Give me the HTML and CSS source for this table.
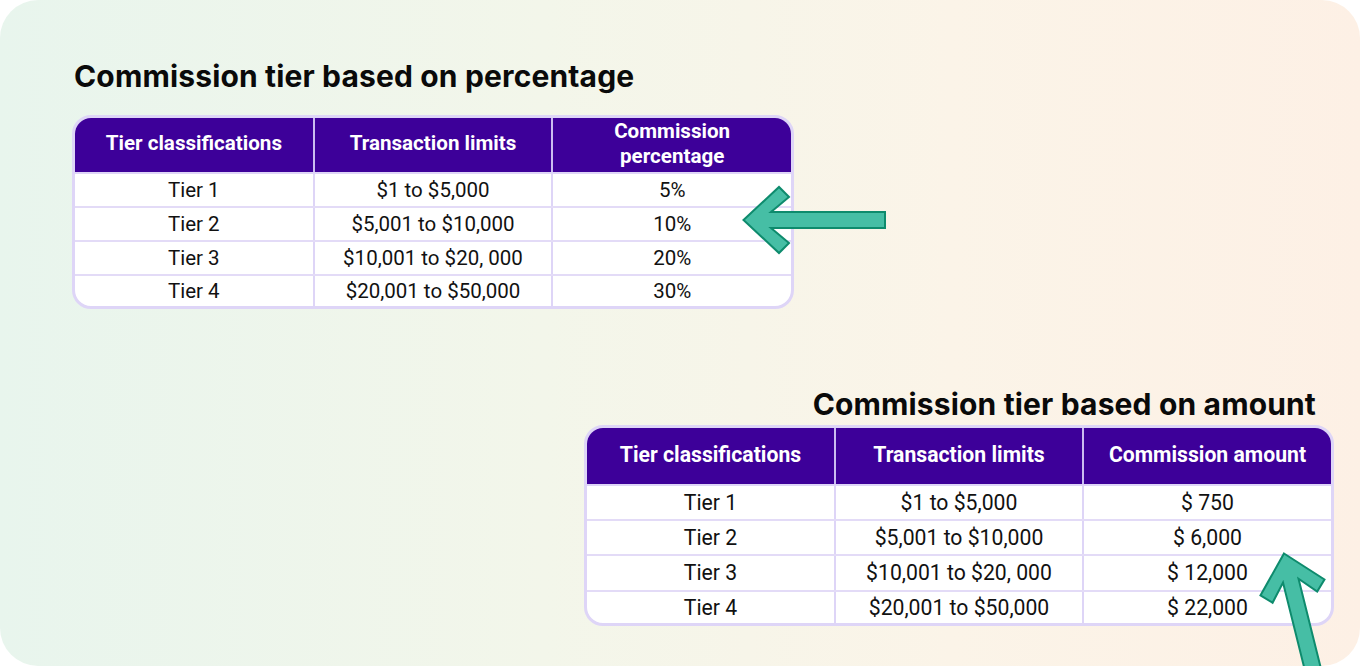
FILE: index.html
```html
<!DOCTYPE html>
<html lang="en">
<head>
<meta charset="utf-8">
<title>Commission tiers</title>
<link rel="stylesheet" href="styles.css">
</head>
<body>
<main class="card">
  <section class="block block-pct">
    <h2 class="title">Commission tier based on percentage</h2>
    <div class="table-wrap t1">
      <table class="tiers">
        <thead>
          <tr>
            <th>Tier classifications</th>
            <th>Transaction limits</th>
            <th>Commission<br>percentage</th>
          </tr>
        </thead>
        <tbody>
          <tr><td>Tier 1</td><td>$1 to $5,000</td><td>5%</td></tr>
          <tr><td>Tier 2</td><td>$5,001 to $10,000</td><td>10%</td></tr>
          <tr><td>Tier 3</td><td>$10,001 to $20, 000</td><td>20%</td></tr>
          <tr class="last"><td>Tier 4</td><td>$20,001 to $50,000</td><td>30%</td></tr>
        </tbody>
      </table>
    </div>
  </section>

  <section class="block block-amt">
    <h2 class="title title-right">Commission tier based on amount</h2>
    <div class="table-wrap t2">
      <table class="tiers">
        <thead>
          <tr>
            <th>Tier classifications</th>
            <th>Transaction limits</th>
            <th>Commission amount</th>
          </tr>
        </thead>
        <tbody>
          <tr><td>Tier 1</td><td>$1 to $5,000</td><td>$ 750</td></tr>
          <tr><td>Tier 2</td><td>$5,001 to $10,000</td><td>$ 6,000</td></tr>
          <tr class="r3"><td>Tier 3</td><td>$10,001 to $20, 000</td><td>$ 12,000</td></tr>
          <tr class="last"><td>Tier 4</td><td>$20,001 to $50,000</td><td>$ 22,000</td></tr>
        </tbody>
      </table>
    </div>
  </section>

  <svg class="arrows" width="1360" height="666" viewBox="0 0 1360 666" aria-hidden="true">
    <polygon class="arrow" points="743.5,220 779,187 789,197 771,212 885,212 885,228 771,228 789,243 779,253"/>
    <g transform="translate(1284,553.5) rotate(76)">
      <polygon class="arrow" points="0,0 35,-33 45,-23 28,-8 200,-8 200,8 28,8 45,23 35,33"/>
    </g>
  </svg>
</main>
</body>
</html>
```

FILE: styles.css
```css
* { box-sizing: border-box; }

html, body {
  margin: 0;
  padding: 0;
  background: #ffffff;
}

.card {
  position: relative;
  width: 1360px;
  height: 666px;
  border-radius: 38px;
  overflow: hidden;
  background: linear-gradient(90deg, #e8f5ed 0%, #f3f6ea 40%, #fbf4e8 70%, #fdf0e5 100%);
  display: flex;
  flex-direction: column;
  font-family: Roboto, "Liberation Sans", sans-serif;
}

.block-pct {
  padding: 59px 0 0 72px;
}

.block-amt {
  align-self: flex-end;
  margin: 78px 26px 0 0;
  width: 750px;
}

.title {
  margin: 0 0 22px 2px;
  font-family: Inter, "Liberation Sans", sans-serif;
  font-weight: 700;
  font-size: 30px;
  line-height: 34px;
  color: #0a0a0a;
  letter-spacing: 0.15px;
}

.title-right {
  text-align: right;
  margin: 0 18px 4px 0;
}

.table-wrap {
  border: 3px solid #ded5f7;
  border-radius: 19px;
  overflow: hidden;
  background: #ffffff;
}

.t1 { width: 722px; }
.t2 { width: 750px; }

.tiers {
  width: 100%;
  border-collapse: collapse;
  table-layout: fixed;
}

.tiers th {
  background: #3d0099;
  color: #ffffff;
  font-weight: 700;
  font-size: 20.6px;
  line-height: 25px;
  height: 55px;
  padding: 0 4px 3px;
  text-align: center;
  vertical-align: middle;
  border-left: 2px solid #cbbcf0;
  border-bottom: 2px solid #ded5f7;
}

.tiers td {
  color: #111111;
  font-weight: 400;
  font-size: 20.5px;
  line-height: 22px;
  height: 34px;
  padding: 0 4px;
  text-align: center;
  vertical-align: middle;
  border-left: 2px solid #ded5f7;
  border-bottom: 2px solid #e3dbf7;
}

.tiers th:first-child,
.tiers td:first-child { border-left: none; }

.tiers tr.last td { border-bottom: none; height: 31px; }

.t2 .tiers th { font-size: 21.2px; height: 57px; }
.t2 .tiers td { font-size: 21.2px; height: 35px; }
.t2 .tiers tr.r3 td { height: 36px; }
.t2 .tiers tr.last td { height: 32px; }

.arrows {
  position: absolute;
  left: 0;
  top: 0;
  pointer-events: none;
}

.arrow {
  fill: #46bea5;
  stroke: #0e8b6d;
  stroke-width: 2;
  stroke-linejoin: miter;
}
```
